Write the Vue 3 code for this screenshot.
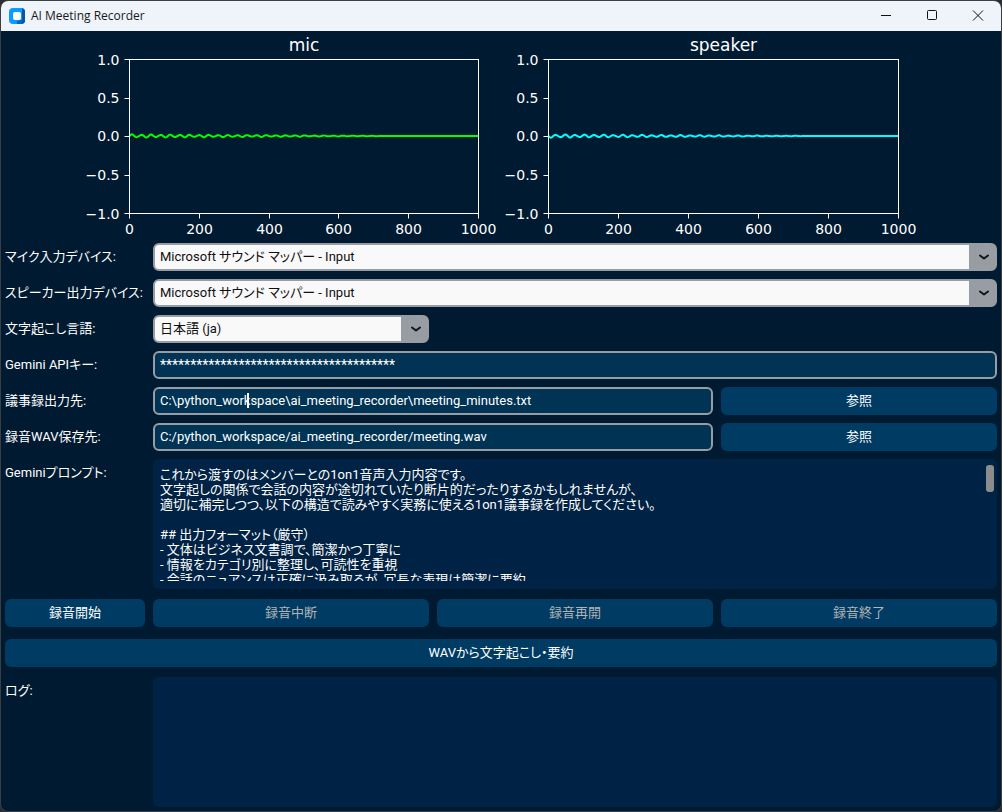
<script setup>
import { ref } from 'vue'

const axisTop = 28.5
const axisBottom = 182.5
const axisMiddle = 105

function wave(left, right, firstSign, peak) {
  const width = right - left
  const points = []
  for (let x = 0; x <= width; x += 1) {
    const fade = Math.max(0, 1 - x / (width * 0.8))
    const swell = 1 + 0.25 * Math.cos((x / 19) * 2 * Math.PI)
    const y = axisMiddle - firstSign * peak * swell * fade * Math.sin((x / 9.6) * 2 * Math.PI)
    points.push(`${(left + x).toFixed(1)},${y.toFixed(2)}`)
  }
  return points.join(' ')
}

function makePlot(title, left, right, color, sign) {
  return {
    title,
    left,
    right,
    color,
    points: wave(left, right, sign, 1.4),
    xTicks: [0, 200, 400, 600, 800, 1000].map((value) => ({
      value,
      x: Math.round(left + ((right - left) * value) / 1000 - 0.5) + 0.5,
    })),
  }
}

const plots = [
  makePlot('mic', 128.5, 477.5, '#00ff00', 1),
  makePlot('speaker', 547.5, 897.5, '#00ffff', -1),
]

const yTicks = [
  { label: '1.0', y: 28.5, baseline: 34 },
  { label: '0.5', y: 67.5, baseline: 72 },
  { label: '0.0', y: 105.5, baseline: 110 },
  { label: '−0.5', y: 144.5, baseline: 149 },
  { label: '−1.0', y: 182.5, baseline: 188 },
]

const deviceName = 'Microsoft サウンド マッパー - Input'
const micDevice = ref(deviceName)
const speakerDevice = ref(deviceName)
const language = ref('日本語 (ja)')
const apiKey = ref('*'.repeat(39))
const minutesPath = ref('C:\\python_workspace\\ai_meeting_recorder\\meeting_minutes.txt')
const wavPath = ref('C:/python_workspace/ai_meeting_recorder/meeting.wav')
const prompt = ref(
  [
    'これから渡すのはメンバーとの1on1音声入力内容です。',
    '文字起しの関係で会話の内容が途切れていたり断片的だったりするかもしれませんが、',
    '適切に補完しつつ、以下の構造で読みやすく実務に使える1on1議事録を作成してください。',
    '',
    '## 出力フォーマット（厳守）',
    '- 文体はビジネス文書調で、簡潔かつ丁寧に',
    '- 情報をカテゴリ別に整理し、可読性を重視',
    '- 会話のニュアンスは正確に汲み取るが、冗長な表現は簡潔に要約',
  ].join('\n'),
)
const log = ref('')
</script>

<template>
  <main class="window">
    <header class="titlebar">
      <svg class="app-icon" viewBox="0 0 16 16" aria-hidden="true">
        <rect width="16" height="16" rx="4" fill="#0a9bff" />
        <path d="M13 0.2 A4 4 0 0 1 16 4 V12 A4 4 0 0 1 12 16 H8 V13 L13 12 Z" fill="#0467c2" />
        <path d="M13 0.2 A4 4 0 0 1 16 4 V12 A4 4 0 0 1 13 15.8 Z" fill="#0558a8" />
        <rect x="4" y="4" width="8" height="8" rx="2" fill="#ffffff" />
      </svg>
      <h1>AI Meeting Recorder</h1>
      <div class="window-controls">
        <button type="button" aria-label="最小化">
          <svg viewBox="0 0 12 12"><path d="M1 5.5H11" /></svg>
        </button>
        <button type="button" aria-label="最大化">
          <svg viewBox="0 0 12 12"><rect x="1.5" y="0.5" width="9" height="9" rx="1" /></svg>
        </button>
        <button type="button" aria-label="閉じる">
          <svg viewBox="0 0 12 12"><path d="M1 0.5L11 10.5M11 0.5L1 10.5" /></svg>
        </button>
      </div>
    </header>

    <svg class="plots" viewBox="0 0 1000 208">
      <g v-for="plot in plots" :key="plot.title">
        <text class="plot-title" :x="(plot.left + plot.right) / 2" y="20">{{ plot.title }}</text>
        <polyline :points="plot.points" :stroke="plot.color" class="trace" />
        <rect
          class="axis"
          :x="plot.left"
          :y="axisTop"
          :width="plot.right - plot.left"
          :height="axisBottom - axisTop"
        />
        <g v-for="tick in yTicks" :key="tick.label">
          <path class="axis" :d="`M${plot.left - 5} ${tick.y}H${plot.left}`" />
          <text class="y-label" :x="plot.left - 10" :y="tick.baseline">{{ tick.label }}</text>
        </g>
        <g v-for="tick in plot.xTicks" :key="tick.value">
          <path class="axis" :d="`M${tick.x} ${axisBottom}V${axisBottom + 5}`" />
          <text class="x-label" :x="tick.x" y="203">{{ tick.value }}</text>
        </g>
      </g>
    </svg>

    <section class="fields">
      <label for="mic">マイク入力デバイス:</label>
      <div class="combo span-3">
        <select id="mic" v-model="micDevice"><option>{{ deviceName }}</option></select>
        <svg viewBox="0 0 10 6" aria-hidden="true"><path d="M1 1.5L5 4.5L9 1.5" /></svg>
      </div>

      <label for="speaker">スピーカー出力デバイス:</label>
      <div class="combo span-3">
        <select id="speaker" v-model="speakerDevice"><option>{{ deviceName }}</option></select>
        <svg viewBox="0 0 10 6" aria-hidden="true"><path d="M1 1.5L5 4.5L9 1.5" /></svg>
      </div>

      <label for="language">文字起こし言語:</label>
      <div class="combo span-1">
        <select id="language" v-model="language"><option>日本語 (ja)</option></select>
        <svg viewBox="0 0 10 6" aria-hidden="true"><path d="M1 1.5L5 4.5L9 1.5" /></svg>
      </div>

      <label for="api-key">Gemini APIキー:</label>
      <div class="entry span-3"><input id="api-key" v-model="apiKey" class="secret" type="text" /></div>

      <label for="minutes">議事録出力先:</label>
      <div class="entry span-2">
        <input id="minutes" v-model="minutesPath" type="text" />
        <span class="caret"></span>
      </div>
      <button type="button" class="action">参照</button>

      <label for="wav">録音WAV保存先:</label>
      <div class="entry span-2"><input id="wav" v-model="wavPath" type="text" /></div>
      <button type="button" class="action">参照</button>

      <label for="prompt">Geminiプロンプト:</label>
      <div class="textbox span-3">
        <textarea id="prompt" v-model="prompt" wrap="off"></textarea>
        <span class="thumb"></span>
      </div>
    </section>

    <section class="recording">
      <button type="button" class="action">録音開始</button>
      <button type="button" class="action" disabled>録音中断</button>
      <button type="button" class="action" disabled>録音再開</button>
      <button type="button" class="action" disabled>録音終了</button>
      <button type="button" class="action transcribe">WAVから文字起こし・要約</button>
    </section>

    <section class="fields log">
      <label for="log">ログ:</label>
      <div class="textbox span-3"><textarea id="log" v-model="log"></textarea></div>
    </section>
  </main>
</template>

<style>
html,
body {
  background: #2b2d30;
}

body {
  margin: 0;
}
</style>

<style scoped>
* {
  box-sizing: border-box;
}

.window {
  display: flex;
  flex-direction: column;
  min-height: 100vh;
  overflow: hidden;
  border: 1px solid #3c3f41;
  border-radius: 8px;
  background: #001a31;
  color: #ffffff;
  font: 13px/15px Roboto, "Noto Sans CJK JP", sans-serif;
  font-feature-settings: "palt";
}

button,
input,
select,
textarea {
  margin: 0;
  padding: 0;
  border: 0;
  outline: 0;
  background: none;
  color: inherit;
  font: inherit;
  font-feature-settings: inherit;
}

.titlebar {
  display: flex;
  align-items: center;
  height: 30px;
  padding-left: 8px;
  background: #eff4fa;
  color: #191919;
}

.app-icon {
  width: 16px;
  height: 16px;
}

.titlebar h1 {
  flex: 1;
  margin: 0 0 0 6px;
  font: 12px/16px "Open Sans", sans-serif;
}

.window-controls {
  display: flex;
}

.window-controls button {
  display: grid;
  place-items: center;
  width: 46px;
  height: 30px;
}

.window-controls svg {
  width: 12px;
  height: 12px;
  fill: none;
  stroke: #111111;
  stroke-width: 1;
}

.plots {
  display: block;
  width: 100%;
  height: 208px;
  font-family: "DejaVu Sans", sans-serif;
  font-size: 14px;
}

.plots text {
  fill: #ffffff;
  text-anchor: middle;
}

.plots .plot-title {
  font-size: 17px;
}

.plots .y-label {
  text-anchor: end;
}

.axis {
  fill: none;
  stroke: #ffffff;
  stroke-width: 1;
}

.trace {
  fill: none;
  stroke-width: 2;
}

.fields {
  display: grid;
  grid-template-columns: 140px repeat(3, 1fr);
  gap: 8px;
  padding: 4px 4px 0;
}

label {
  grid-column: 1;
  height: 28px;
  line-height: 28px;
  white-space: nowrap;
}

.span-3 {
  grid-column: span 3;
}

.span-2 {
  grid-column: span 2;
}

.span-1 {
  grid-column: span 1;
}

.combo,
.entry {
  position: relative;
  height: 28px;
  border: 2px solid #979da2;
  border-radius: 6px;
}

.combo {
  background: #979da2;
}

.combo select {
  display: block;
  appearance: none;
  width: calc(100% - 26px);
  height: 24px;
  padding: 0 0 2px 5px;
  border-radius: 4px 0 0 4px;
  background: #f9f9fa;
  color: #101010;
}

.combo svg {
  position: absolute;
  top: 9px;
  right: 6px;
  width: 10px;
  height: 6px;
  fill: none;
  stroke: #151515;
  stroke-width: 2;
  stroke-linecap: round;
  stroke-linejoin: round;
  pointer-events: none;
}

.entry {
  background: #003354;
}

.entry input {
  display: block;
  width: 100%;
  height: 24px;
  padding: 0 5px 2px;
}

.entry .secret {
  padding-bottom: 0;
  font-size: 14px;
}

.caret {
  position: absolute;
  top: 4px;
  left: 92px;
  width: 2px;
  height: 15px;
  background: #ffffff;
}

.action {
  height: 28px;
  padding-bottom: 2px;
  border-radius: 6px;
  background: #003b64;
  color: #ffffff;
}

.action:disabled {
  color: #b3b3b3;
}

.textbox {
  position: relative;
  height: 130px;
  padding: 8px 7px;
  border-radius: 6px;
  background: #002244;
}

.textbox textarea {
  display: block;
  width: 100%;
  height: 100%;
  overflow: hidden;
  resize: none;
}

.thumb {
  position: absolute;
  top: 6px;
  right: 3px;
  width: 8px;
  height: 27px;
  border-radius: 3px;
  background: #8c8c8c;
}

.recording {
  display: grid;
  grid-template-columns: 140px repeat(3, 1fr);
  gap: 12px 8px;
  padding: 10px 4px;
}

.transcribe {
  grid-column: 1 / -1;
}

.log {
  flex: 1;
  padding: 0 4px 4px;
}

.log .textbox {
  height: auto;
  min-height: 130px;
}
</style>
